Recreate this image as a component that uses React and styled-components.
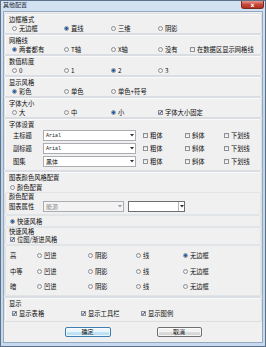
import React from 'react';
import styled, { createGlobalStyle } from 'styled-components';

const GlobalStyle = createGlobalStyle`
  * { box-sizing: border-box; }
  html, body { margin: 0; padding: 0; background: #c3d6eb; }
  body {
    font-family: "Noto Sans CJK SC", "Liberation Sans", sans-serif;
    font-size: 6.3px;
    color: #0e0e0e;
  }
`;

const Window = styled.div`
  width: 266px;
  height: 347px;
  display: flex;
  flex-direction: column;
  border: 1px solid #5d7188;
  background: linear-gradient(#d3e2f2, #bfd4ea 40%, #c6d9ee);
  overflow: hidden;
`;

const TitleBar = styled.div`
  height: 10px;
  display: flex;
  align-items: flex-start;
  padding-left: 2px;
  flex: none;
`;

const Title = styled.span`
  line-height: 8px;
  font-size: 6px;
  color: #1e2a36;
`;

const CloseButton = styled.div`
  margin-left: auto;
  margin-right: 1px;
  width: 23px;
  height: 8px;
  border: 1px solid #7a2a24;
  border-top: none;
  border-radius: 0 0 3px 3px;
  background: linear-gradient(#e59a8e, #c9483b 50%, #b1321f);
  color: #fff;
  font-family: "DejaVu Sans", sans-serif;
  font-size: 6px;
  font-weight: bold;
  line-height: 7px;
  text-align: center;
`;

const Content = styled.div`
  flex: 1;
  margin: 0 2px 3px 2px;
  border: 1px solid #95a8bd;
  background: #f0f0f0;
  padding-top: 1px;
  display: flex;
  flex-direction: column;
`;

const Panel = styled.div`
  border: 1px solid #dadee2;
  border-radius: 2px;
  box-shadow: inset 1px 1px 0 #fafafa;
  padding: 1px 0 ${(p) => p.$pb ?? 0}px 0;
`;

const SubBox = styled.div`
  border: 1px solid #e2e5e8;
  border-radius: 2px;
  padding: ${(p) => p.$pt ?? 0}px 0 ${(p) => p.$pb ?? 0}px 0;
`;

const Caption = styled.div`
  height: ${(p) => p.$h ?? 9}px;
  line-height: ${(p) => p.$h ?? 9}px;
  padding-left: ${(p) => p.$indent ?? 4}px;
  white-space: nowrap;
`;

const OptionRow = styled.div`
  display: grid;
  grid-template-columns: ${(p) => p.$cols};
  align-items: center;
  height: ${(p) => p.$h ?? 9}px;
  padding-left: ${(p) => p.$indent ?? 7}px;
`;

const Option = styled.span`
  display: inline-flex;
  align-items: center;
  gap: 2px;
  white-space: nowrap;
`;

const RadioDot = styled.span`
  flex: none;
  width: 5px;
  height: 5px;
  border-radius: 50%;
  border: 1px solid #8d9096;
  background: ${(p) =>
    p.$on
      ? 'radial-gradient(circle, #1a56a8 0 0.9px, #5b96d6 1.4px, #eef3f8 1.8px)'
      : 'linear-gradient(#e2e2e2, #ffffff)'};
`;

const CheckBox = styled.span`
  flex: none;
  width: 5px;
  height: 5px;
  border: 1px solid #8d9096;
  background: linear-gradient(#dedede, #ffffff);
  position: relative;
  svg {
    position: absolute;
    left: -1px;
    top: -1px;
  }
`;

const Radio = ({ on, children }) => (
  <Option>
    <RadioDot $on={on} />
    {children}
  </Option>
);

const Check = ({ on, children }) => (
  <Option>
    <CheckBox>
      {on && (
        <svg width="5" height="5" viewBox="0 0 5 5">
          <path d="M1 2.6 L2 3.7 L4 1" stroke="#27437f" strokeWidth="1" fill="none" />
        </svg>
      )}
    </CheckBox>
    {children}
  </Option>
);

const FontRow = styled.div`
  display: grid;
  grid-template-columns: 30px 100px 42px 39px 1fr;
  align-items: center;
  height: 13px;
  padding-left: 8px;
`;

const Select = styled.div`
  width: ${(p) => p.$w}px;
  height: 11px;
  border: 1px solid ${(p) => (p.$dark ? '#6f6f6f' : '#abadb3')};
  background: ${(p) => (p.$disabled ? '#f3f3f3' : '#ffffff')};
  display: flex;
  align-items: center;
  padding-left: 2px;
  font-family: ${(p) => (p.$mono ? '"Liberation Mono", monospace' : 'inherit')};
  font-size: ${(p) => (p.$mono ? 5 : 6)}px;
  color: ${(p) => (p.$disabled ? '#8a8a8a' : '#222')};
  white-space: nowrap;
`;

const Arrow = styled.span`
  margin-left: auto;
  width: 6px;
  height: 100%;
  display: flex;
  align-items: center;
  justify-content: center;
  border-left: ${(p) => (p.$boxed ? '1px solid #b5b5b5' : 'none')};
`;

const Dropdown = ({ w, value, mono, disabled, dark, boxed }) => (
  <Select $w={w} $mono={mono} $disabled={disabled} $dark={dark}>
    {value}
    <Arrow $boxed={boxed}>
      <svg width="4" height="3" viewBox="0 0 4 3">
        <path d="M0 0 L4 0 L2 2.5 Z" fill={disabled ? '#9a9a9a' : '#333'} />
      </svg>
    </Arrow>
  </Select>
);

const AttrRow = styled.div`
  display: flex;
  align-items: center;
  gap: 4px;
  height: 13px;
  padding-left: 3px;
`;

const AttrLabel = styled.span`
  width: 30px;
`;

const StyleGrid = styled.div`
  display: grid;
  grid-template-columns: 27px 51px 48px 47px 1fr;
  grid-auto-rows: 15.5px;
  align-items: center;
  padding-left: 4px;
`;

const ButtonBar = styled.div`
  display: flex;
  justify-content: center;
  gap: 46px;
  margin-top: 5px;
`;

const Button = styled.button`
  width: ${(p) => p.$w}px;
  height: 10px;
  padding: 0;
  font-family: inherit;
  font-size: 6px;
  line-height: 8px;
  color: #111;
  border: 1px solid ${(p) => (p.$primary ? '#3c7fb1' : '#707070')};
  border-radius: 2px;
  background: ${(p) =>
    p.$primary
      ? 'linear-gradient(#eaf6fd 50%, #c4e5f6 50%, #b3dcf3)'
      : 'linear-gradient(#f2f2f2 50%, #dddddd 50%, #cfcfcf)'};
  box-shadow: inset 0 0 0 1px rgba(255, 255, 255, 0.75);
`;

const QUICK = ['高', '中等', '暗'];
const FONTS = [
  ['主标题', 'Arial', true],
  ['副标题', 'Arial', true],
  ['图集', '黑体', false],
];

export default function App() {
  return (
    <>
      <GlobalStyle />
      <Window>
        <TitleBar>
          <Title>其他配置</Title>
          <CloseButton>x</CloseButton>
        </TitleBar>
        <Content>
          <Panel>
            <Caption>边框格式</Caption>
            <OptionRow $cols="52px 47px 47px 1fr">
              <Radio>无边框</Radio>
              <Radio on>直线</Radio>
              <Radio>三维</Radio>
              <Radio>阴影</Radio>
            </OptionRow>
          </Panel>
          <Panel>
            <Caption>网格线</Caption>
            <OptionRow $cols="52px 47px 47px 32px 1fr">
              <Radio on>两者都有</Radio>
              <Radio>T轴</Radio>
              <Radio>X轴</Radio>
              <Radio>没有</Radio>
              <Check>在数据区显示网格线</Check>
            </OptionRow>
          </Panel>
          <Panel>
            <Caption>数值精度</Caption>
            <OptionRow $cols="52px 47px 47px 1fr">
              <Radio>0</Radio>
              <Radio>1</Radio>
              <Radio on>2</Radio>
              <Radio>3</Radio>
            </OptionRow>
          </Panel>
          <Panel>
            <Caption>显示风格</Caption>
            <OptionRow $cols="52px 47px 1fr">
              <Radio on>彩色</Radio>
              <Radio>单色</Radio>
              <Radio>单色+符号</Radio>
            </OptionRow>
          </Panel>
          <Panel>
            <Caption>字体大小</Caption>
            <OptionRow $cols="52px 47px 47px 1fr">
              <Radio>大</Radio>
              <Radio>中</Radio>
              <Radio on>小</Radio>
              <Check on>字体大小固定</Check>
            </OptionRow>
          </Panel>
          <Panel $pb={2}>
            <Caption>字体设置</Caption>
            {FONTS.map(([label, font, mono]) => (
              <FontRow key={label}>
                <span>{label}</span>
                <Dropdown w={93} value={font} mono={mono} />
                <Check>粗体</Check>
                <Check>斜体</Check>
                <Check>下划线</Check>
              </FontRow>
            ))}
          </Panel>
          <Panel>
            <Caption $h={10}>图表颜色风格配置</Caption>
            <OptionRow $cols="1fr" $h={9} $indent={5}>
              <Radio>颜色配置</Radio>
            </OptionRow>
            <SubBox $pb={1}>
              <Caption $h={7} $indent={3}>颜色配置</Caption>
              <AttrRow>
                <AttrLabel>图表属性</AttrLabel>
                <Dropdown w={81} value="能源" disabled />
                <Dropdown w={57} value="" dark boxed />
              </AttrRow>
            </SubBox>
            <SubBox>
              <OptionRow $cols="1fr" $h={10} $indent={4}>
                <Radio on>快速风格</Radio>
              </OptionRow>
            </SubBox>
            <SubBox>
              <Caption $h={7} $indent={3}>快速风格</Caption>
              <OptionRow $cols="1fr" $h={9} $indent={4}>
                <Check on>位图/渐进风格</Check>
              </OptionRow>
            </SubBox>
            <SubBox $pt={2}>
              <StyleGrid>
                {QUICK.map((level, i) => (
                  <React.Fragment key={level}>
                    <span>{level}</span>
                    <Radio>凹进</Radio>
                    <Radio>阴影</Radio>
                    <Radio>线</Radio>
                    <Radio on={i === 0}>无边框</Radio>
                  </React.Fragment>
                ))}
              </StyleGrid>
            </SubBox>
          </Panel>
          <Panel $pb={2}>
            <Caption>显示</Caption>
            <OptionRow $cols="69px 60px 1fr" $h={11}>
              <Check on>显示表格</Check>
              <Check on>显示工具栏</Check>
              <Check on>显示图例</Check>
            </OptionRow>
          </Panel>
          <ButtonBar>
            <Button $w={46} $primary>确定</Button>
            <Button $w={45}>取消</Button>
          </ButtonBar>
        </Content>
      </Window>
    </>
  );
}
